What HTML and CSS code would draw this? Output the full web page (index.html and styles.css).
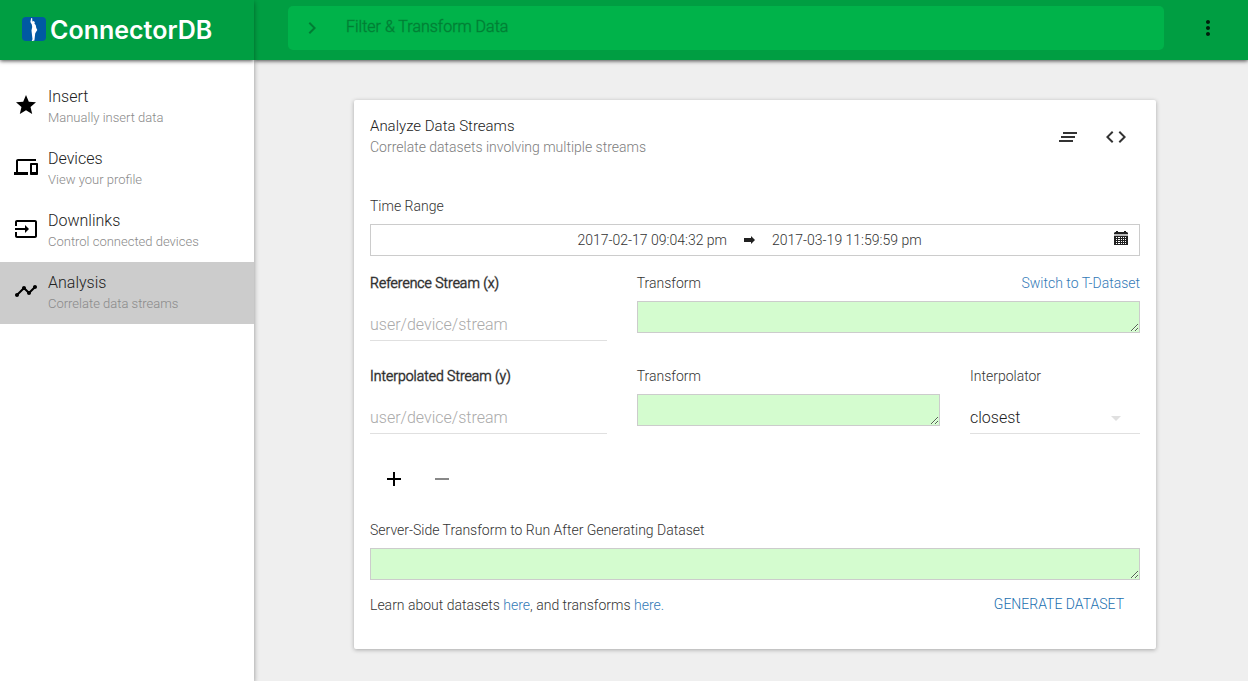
FILE: index.html
```html
<!DOCTYPE html>
<html lang="en">
<head>
<meta charset="utf-8">
<meta name="viewport" content="width=device-width, initial-scale=1">
<title>ConnectorDB</title>
<link rel="stylesheet" href="styles.css">
</head>
<body>
<div class="app">
  <aside class="sidebar">
    <a class="brand" href="#">
      <svg class="brand-mark" viewBox="0 0 24 24" aria-hidden="true"><rect width="24" height="24" rx="4" fill="#0059a3"/><path fill="#fff" d="M9.200 1l1 .2.2 3.300 1.400-.5 1 1.300-.3 1.500 1.200 1.200.6 3 1 2-1.300 2-.8 1.500-.4 3.500-.4 3.500-1.800.5-.9-.3.800-1.400-.5-4.300-.5-4.500.7-3.500-.4-2.500L8.400 5z"/></svg>
      <span class="brand-name">ConnectorDB</span>
    </a>
    <nav class="menu">
      <a class="menu-item" href="#">
        <svg class="icon menu-icon" viewBox="0 0 24 24" aria-hidden="true"><path d="M12 17.270L18.180 21l-1.640-7.030L22 9.240l-7.190-.61L12 2 9.190 8.630 2 9.240l5.460 4.730L5.820 21z"/></svg>
        <span class="menu-text"><span class="menu-title">Insert</span><span class="menu-note">Manually insert data</span></span>
      </a>
      <a class="menu-item" href="#">
        <svg class="icon menu-icon" viewBox="0 0 24 24" aria-hidden="true"><path d="M4 6h18V4H4c-1.100 0-2 .9-2 2v11H0v3h14v-3H4V6zm19 2h-6c-.55 0-1 .45-1 1v10c0 .55.45 1 1 1h6c.55 0 1-.45 1-1V9c0-.55-.45-1-1-1zm-1 9h-4v-7h4v7z"/></svg>
        <span class="menu-text"><span class="menu-title">Devices</span><span class="menu-note">View your profile</span></span>
      </a>
      <a class="menu-item" href="#">
        <svg class="icon menu-icon" viewBox="0 0 24 24" aria-hidden="true"><path d="M21 3.010H3c-1.100 0-2 .9-2 2V9h2V4.990h18v14.030H3V15H1v4.010c0 1.100.9 1.980 2 1.980h18c1.100 0 2-.88 2-1.980v-14c0-1.110-.9-2-2-2zM11 16l4-4-4-4v3H1v2h10v3z"/></svg>
        <span class="menu-text"><span class="menu-title">Downlinks</span><span class="menu-note">Control connected devices</span></span>
      </a>
      <a class="menu-item menu-item-active" href="#" aria-current="page">
        <svg class="icon menu-icon" viewBox="0 0 24 24" aria-hidden="true"><path d="M23 8c0 1.100-.9 2-2 2-.18 0-.35-.02-.51-.07l-3.560 3.550c.05.16.07.34.07.52 0 1.100-.9 2-2 2s-2-.9-2-2c0-.18.02-.36.07-.52l-2.550-2.550c-.16.05-.34.07-.52.07s-.36-.02-.52-.07l-4.550 4.560c.05.16.07.33.07.51 0 1.100-.9 2-2 2s-2-.9-2-2 .9-2 2-2c.18 0 .35.02.51.07l4.560-4.550C8.020 9.360 8 9.180 8 9c0-1.100.9-2 2-2s2 .9 2 2c0 .18-.02.36-.07.52l2.550 2.550c.16-.05.34-.07.52-.07s.36.02.52.07l3.550-3.560C19.020 8.350 19 8.180 19 8c0-1.100.9-2 2-2s2 .9 2 2z"/></svg>
        <span class="menu-text"><span class="menu-title">Analysis</span><span class="menu-note">Correlate data streams</span></span>
      </a>
    </nav>
  </aside>

  <div class="page">
    <header class="topbar">
      <div class="search">
        <button class="search-toggle" type="button" aria-label="Expand">
          <svg class="icon" viewBox="0 0 24 24" aria-hidden="true"><path d="M10 6L8.590 7.410 13.170 12l-4.580 4.590L10 18l6-6z"/></svg>
        </button>
        <input class="search-input" type="text" placeholder="Filter &amp; Transform Data" aria-label="Filter and transform data">
      </div>
      <button class="more" type="button" aria-label="More">
        <svg class="icon" viewBox="0 0 24 24" aria-hidden="true"><path d="M12 8c1.100 0 2-.9 2-2s-.9-2-2-2-2 .9-2 2 .9 2 2 2zm0 2c-1.100 0-2 .9-2 2s.9 2 2 2 2-.9 2-2-.9-2-2-2zm0 6c-1.100 0-2 .9-2 2s.9 2 2 2 2-.9 2-2-.9-2-2-2z"/></svg>
      </button>
    </header>

    <main class="content">
      <form class="card">
        <div class="card-head">
          <div class="card-titles">
            <h1 class="card-title">Analyze Data Streams</h1>
            <p class="card-subtitle">Correlate datasets involving multiple streams</p>
          </div>
          <div class="card-tools">
            <button class="tool" type="button" aria-label="Clear">
              <svg class="icon" viewBox="0 0 24 24" aria-hidden="true"><path d="M5 13h14v-2H5v2zm-2 4h14v-2H3v2zM7 7v2h14V7H7z"/></svg>
            </button>
            <button class="tool" type="button" aria-label="Show code">
              <svg class="icon" viewBox="0 0 24 24" aria-hidden="true"><path d="M9.400 16.600L4.800 12l4.600-4.600L8 6l-6 6 6 6 1.400-1.400zm5.200 0l4.600-4.600-4.600-4.600L16 6l6 6-6 6-1.400-1.400z"/></svg>
            </button>
          </div>
        </div>

        <div class="field">
          <span class="label" id="range-label">Time Range</span>
          <button class="range" type="button" aria-labelledby="range-label">
            <span class="range-dates">
              <span>2017-02-17 09:04:32 pm</span>
              <svg class="range-arrow" viewBox="0 0 11 8" aria-hidden="true"><path d="M0 2h7V0l4 4-4 4V6H0z"/></svg>
              <span>2017-03-19 11:59:59 pm</span>
            </span>
            <svg class="range-icon" viewBox="0 0 14 14" aria-hidden="true"><path fill-rule="evenodd" d="M2 0h2v1h6V0h2v1h1l1 1v1H0V2l1-1h1zM0 5h14v9H0zM2 6v1h1V6zm2 0v1h2V6zm3 0v1h1V6zm2 0v1h1V6zm2 0v1h1V6zM2 8v1h1V8zm2 0v1h2V8zm3 0v1h1V8zm2 0v1h1V8zm2 0v1h1V8zM2 10v1h1v-1zm2 0v1h2v-1zm3 0v1h1v-1zm2 0v1h1v-1zm2 0v1h1v-1zM2 12v1h1v-1zm2 0v1h2v-1zm3 0v1h1v-1zm2 0v1h1v-1zm2 0v1h1v-1z"/><path class="range-icon-band" d="M0 3h14v2H0z"/></svg>
          </button>
        </div>

        <div class="row">
          <div class="field col-4">
            <label class="label label-strong" for="ref-stream">Reference Stream (x)</label>
            <input class="text-input" id="ref-stream" type="text" placeholder="user/device/stream">
          </div>
          <div class="field col-8">
            <div class="label-line">
              <label class="label" for="ref-transform">Transform</label>
              <a class="link" href="#">Switch to T-Dataset</a>
            </div>
            <textarea class="code" id="ref-transform" rows="1"></textarea>
          </div>
        </div>

        <div class="row">
          <div class="field col-4">
            <label class="label label-strong" for="int-stream">Interpolated Stream (y)</label>
            <input class="text-input" id="int-stream" type="text" placeholder="user/device/stream">
          </div>
          <div class="field col-5">
            <label class="label" for="int-transform">Transform</label>
            <textarea class="code" id="int-transform" rows="1"></textarea>
          </div>
          <div class="field col-3">
            <label class="label" for="interpolator">Interpolator</label>
            <div class="select-wrap">
              <select class="text-input select" id="interpolator"><option>closest</option></select>
              <svg class="icon select-arrow" viewBox="0 0 24 24" aria-hidden="true"><path d="M7 10l5 5 5-5z"/></svg>
            </div>
          </div>
        </div>

        <div class="stream-tools">
          <button class="tool tool-dark" type="button" aria-label="Add stream">
            <svg class="icon" viewBox="0 0 24 24" aria-hidden="true"><path d="M19 13h-6v6h-2v-6H5v-2h6V5h2v6h6v2z"/></svg>
          </button>
          <button class="tool tool-muted" type="button" aria-label="Remove stream">
            <svg class="icon" viewBox="0 0 24 24" aria-hidden="true"><path d="M19 13H5v-2h14v2z"/></svg>
          </button>
        </div>

        <div class="field">
          <label class="label" for="server-transform">Server-Side Transform to Run After Generating Dataset</label>
          <textarea class="code" id="server-transform" rows="1"></textarea>
        </div>

        <div class="card-foot">
          <p class="help">Learn about datasets <a class="link" href="#">here</a>, and transforms <a class="link" href="#">here.</a></p>
          <button class="generate" type="submit">GENERATE DATASET</button>
        </div>
      </form>
    </main>
  </div>
</div>
</body>
</html>
```

FILE: styles.css
```css
*,
*::before,
*::after {
  box-sizing: border-box;
}

body {
  margin: 0;
  background: #efefef;
  color: #333;
  font: 300 14px/20px Roboto, "Liberation Sans", sans-serif;
}

h1,
p {
  margin: 0;
  font-weight: inherit;
}

button,
input,
select,
textarea {
  margin: 0;
  padding: 0;
  border: 0;
  border-radius: 0;
  background: none;
  color: inherit;
  font: inherit;
}

button {
  cursor: pointer;
}

a {
  text-decoration: none;
}

.icon {
  display: block;
  flex: none;
  width: 24px;
  height: 24px;
  fill: currentColor;
}

.app {
  display: flex;
  min-height: 100vh;
}

/* Sidebar */

.sidebar {
  position: relative;
  z-index: 1;
  flex: none;
  width: 254px;
  background: #fff;
  box-shadow: 0 2px 5px rgba(0, 0, 0, 0.4);
}

.brand {
  display: flex;
  align-items: center;
  gap: 4px;
  height: 60px;
  padding: 0 22px;
  background: #009e42;
  box-shadow: 0 1px 4px rgba(0, 0, 0, 0.7);
  clip-path: inset(0 0 -8px 0);
  color: #fff;
}

.brand-mark {
  flex: none;
  width: 24px;
  height: 24px;
  margin-bottom: 2px;
}

.brand-name {
  font: 600 25px/32px Inter, Lato, sans-serif;
}

.menu {
  padding-top: 16px;
}

.menu-item {
  display: flex;
  align-items: flex-start;
  gap: 10px;
  padding: 10px 14px;
  color: #000;
}

.menu-icon {
  margin-top: 7px;
}

.menu-item-active {
  background: #ccc;
}

.menu-text {
  display: flex;
  flex-direction: column;
}

.menu-title {
  color: #212121;
  font-size: 16px;
  line-height: 22px;
}

.menu-note {
  color: #8a8a8a;
  font-size: 13px;
  line-height: 20px;
}

/* Top bar */

.page {
  flex: 1;
  min-width: 0;
}

.topbar {
  display: flex;
  align-items: flex-start;
  justify-content: space-between;
  gap: 20px;
  height: 60px;
  padding: 6px 16px 0 34px;
  background: #009e42;
  box-shadow: 0 1px 4px rgba(0, 0, 0, 0.7);
}

.search {
  display: flex;
  flex: 1;
  height: 44px;
  border-radius: 5px;
  background: #00b34a;
  color: #007d34;
}

.search-toggle {
  flex: none;
  padding: 0 12px;
}

.search-input {
  flex: 1;
  min-width: 0;
  height: 40px;
  padding: 0 10px;
  font-size: 16px;
}

.search-input::placeholder {
  color: #007d34;
  -webkit-text-stroke: 1px rgba(0, 125, 52, 0.4);
}

.more {
  flex: none;
  width: 48px;
  height: 44px;
  padding: 0 12px;
  color: #001f0d;
}

/* Card */

.content {
  padding: 40px 92px 32px 100px;
}

.card {
  display: flex;
  flex-direction: column;
  padding: 16px 16px 27px;
  border-radius: 2px;
  background: #fff;
  box-shadow: 0 1px 4px rgba(0, 0, 0, 0.3);
}

.card-head {
  display: flex;
  justify-content: space-between;
  padding-bottom: 38px;
}

.card-title {
  color: #212121;
  font-size: 15px;
  line-height: 21px;
}

.card-subtitle {
  color: #7d7d7d;
  line-height: 21px;
}

.card-tools {
  display: flex;
}

.tool {
  width: 48px;
  height: 42px;
  padding: 0 12px;
}

.tool-dark {
  color: #000;
}

.tool-muted {
  color: #888;
}

.field {
  display: flex;
  flex-direction: column;
  gap: 8px;
  min-width: 0;
}

.label-strong {
  color: #212121;
  -webkit-text-stroke: 1px rgba(33, 33, 33, 0.5);
}

.label-line {
  display: flex;
  justify-content: space-between;
}

.link {
  color: #337ab7;
}

.range {
  display: flex;
  align-items: center;
  height: 32px;
  padding: 0 11px 0 14px;
  border: 1px solid #ccc;
}

.range-dates {
  display: flex;
  flex: 1;
  align-items: center;
  justify-content: center;
  gap: 17px;
}

.range-arrow {
  width: 11px;
  height: 8px;
  fill: #212121;
}

.range-icon {
  width: 14px;
  height: 14px;
  margin-bottom: 4px;
  fill: #212121;
}

.range-icon-band {
  fill: #bbb;
}

.row {
  display: grid;
  grid-template-columns: repeat(12, minmax(0, 1fr));
  column-gap: 30px;
  padding-top: 17px;
}

.row + .row {
  padding-top: 25px;
}

.col-3 {
  grid-column: span 3;
}

.col-4 {
  grid-column: span 4;
}

.col-5 {
  grid-column: span 5;
}

.col-8 {
  grid-column: span 8;
}

.text-input {
  width: 100%;
  height: 40px;
  padding-top: 8px;
  border-bottom: 1px solid #e0e0e0;
  color: #212121;
  font-size: 16px;
}

.text-input::placeholder {
  color: #aaa;
}

.select-wrap {
  position: relative;
}

.select {
  display: block;
  appearance: none;
}

.select-arrow {
  position: absolute;
  top: 12px;
  right: 12px;
  color: #e0e0e0;
  pointer-events: none;
}

.code {
  display: block;
  width: 100%;
  height: 32px;
  padding: 5px;
  border: 1px solid #ccc;
  background: #d4fccf;
  resize: vertical;
}

.stream-tools {
  display: flex;
  padding: 24px 0 20px;
}

.card-foot {
  display: flex;
  align-items: center;
  justify-content: space-between;
  padding-top: 6px;
}

.help {
  padding-top: 2px;
}

.generate {
  height: 36px;
  padding: 0 16px;
  color: #1a6fb0;
}
```
